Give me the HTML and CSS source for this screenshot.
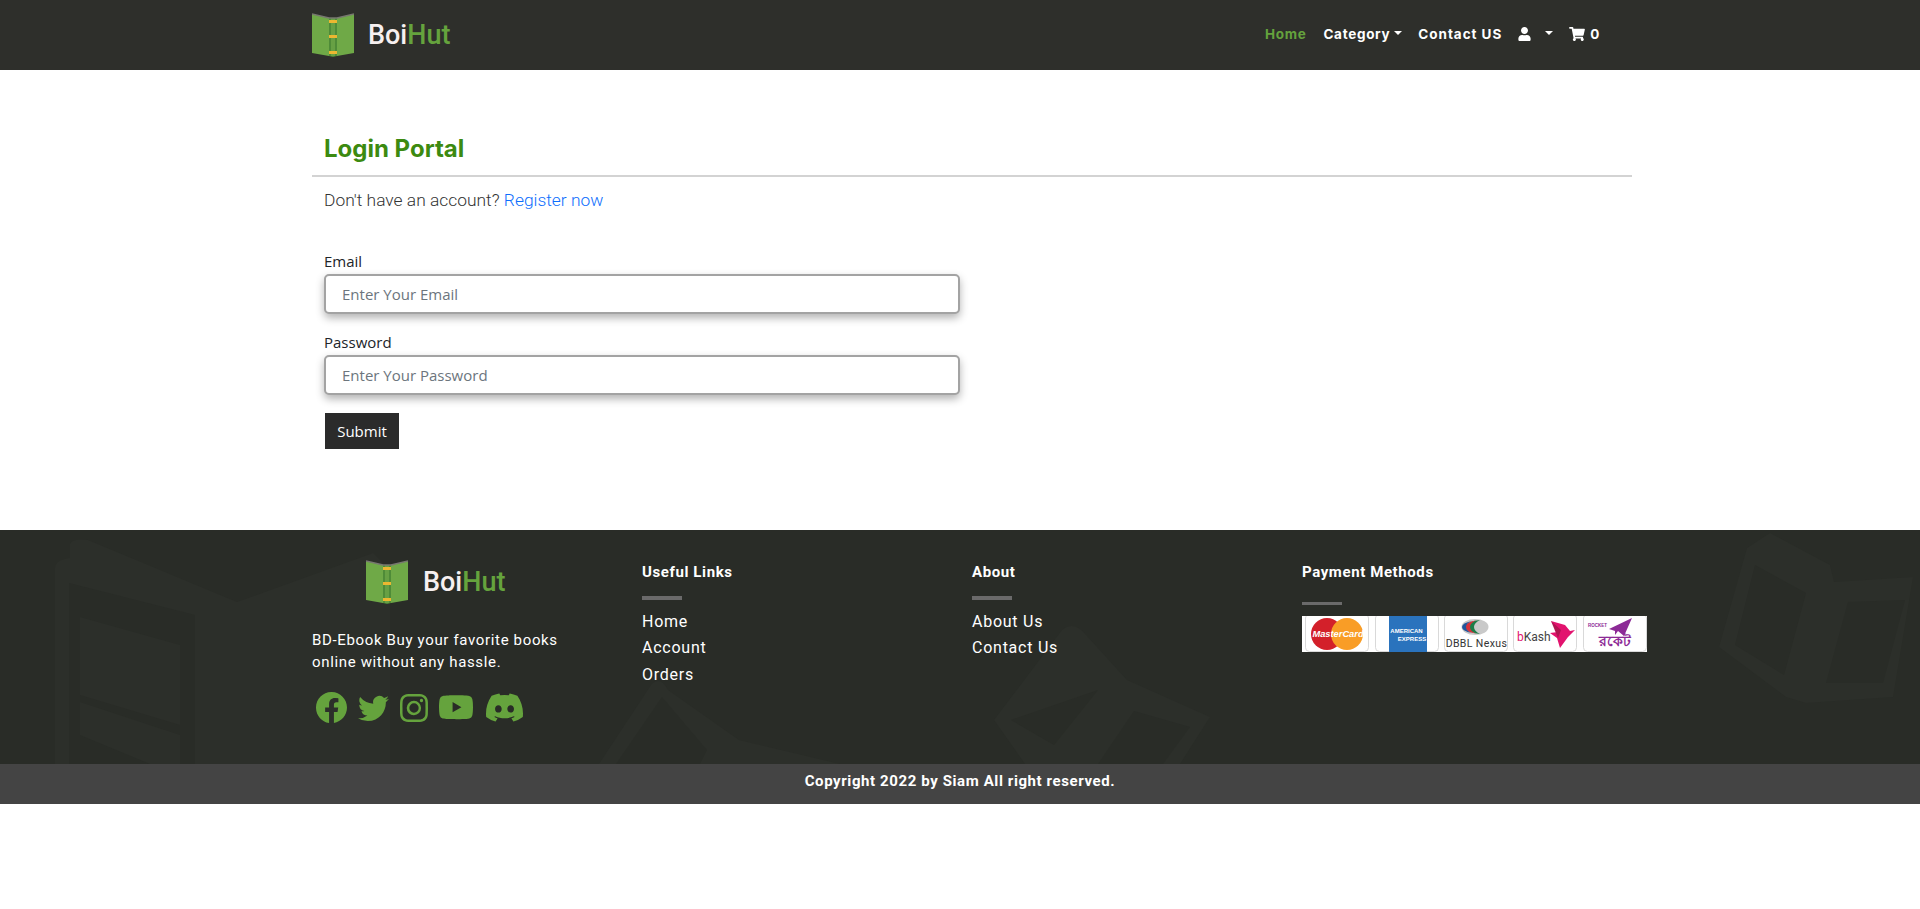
FILE: index.html
```html
<!DOCTYPE html>
<html>
<head>
	<title>BoiHut - Login</title>
	<link rel="stylesheet" href="styles.css">
</head>
<body>
	<svg class="defs">
		<symbol id="book" viewBox="0 0 42 44">
			<path d="M0 1 L17 5 V43 L0 40 Z" fill="#6fa947"/>
			<path d="M42 1 L25 5 V43 L42 40 Z" fill="#6fa947"/>
			<path d="M17 5 H25 V43 L21 44 L17 43 Z" fill="#4f8b38"/>
			<path d="M19 5 H23 V43 H19 Z" fill="#67a044"/>
			<path d="M0 1 L17 5 H25 L42 1" fill="none" stroke="#77786f" stroke-width="1.5"/>
			<path d="M17 7 H25 V10 H17 Z M17 22 H25 V25 H17 Z M17 38 H25 V41 H17 Z" fill="#ecb731"/>
		</symbol>
	</svg>

	<nav class="navbar">
		<div class="container nav-inner">
			<a class="brand" href="#">
				<svg class="book"><use href="#book"/></svg>
				<span class="brand-name">Boi<span class="green">Hut</span></span>
			</a>
			<ul class="nav-links">
				<li class="nav-home"><a href="#">Home</a></li>
				<li class="nav-cat"><a href="#">Category</a><span class="caret"></span></li>
				<li class="nav-contact"><a href="#">Contact US</a></li>
				<li class="nav-user">
					<svg class="user-icon" viewBox="0 0 448 512"><path fill="#fff" d="M224 256c70.7 0 128-57.3 128-128S294.7 0 224 0 96 57.3 96 128s57.3 128 128 128zm89.6 32h-16.7c-22.2 10.2-46.9 16-72.9 16s-50.6-5.8-72.9-16h-16.7C60.2 288 0 348.2 0 422.4V464c0 26.5 21.5 48 48 48h352c26.5 0 48-21.5 48-48v-41.6c0-74.2-60.2-134.4-134.4-134.4z"/></svg>
					<span class="caret"></span>
				</li>
				<li class="nav-cart">
					<svg class="cart-icon" viewBox="0 0 576 512"><path fill="#fff" d="M528.12 301.319l47.273-208C578.806 78.301 567.391 64 551.99 64H159.208l-9.166-44.81C147.758 8.021 137.93 0 126.529 0H24C10.745 0 0 10.745 0 24v16c0 13.255 10.745 24 24 24h69.883l70.248 343.435C147.325 417.1 136 435.222 136 456c0 30.928 25.072 56 56 56s56-25.072 56-56c0-15.674-6.447-29.835-16.824-40h209.647C430.447 426.165 424 440.326 424 456c0 30.928 25.072 56 56 56s56-25.072 56-56c0-22.172-12.888-41.332-31.579-50.405l5.517-24.276c3.413-15.018-8.002-29.319-23.403-29.319H218.117l-6.545-32h293.145c11.206 0 20.92-7.754 23.403-18.681z"/></svg>
					<span>0</span>
				</li>
			</ul>
		</div>
	</nav>

	<main class="container login">
		<h2 class="login-title">Login Portal</h2>
		<p class="login-note">Don't have an account? <a href="#">Register now</a></p>
		<form class="login-form">
			<label class="field-label" for="email">Email</label>
			<input class="field" id="email" type="email" placeholder="Enter Your Email">
			<label class="field-label second" for="password">Password</label>
			<input class="field" id="password" type="password" placeholder="Enter Your Password">
			<button class="submit-btn" type="button">Submit</button>
		</form>
	</main>

	<footer>
		<div class="footer-main">
			<!-- faint books behind the footer -->
			<svg class="watermark" viewBox="0 0 1920 234" preserveAspectRatio="none">
				<g fill="#2c2f2a">
					<path d="M55 234 V38 Q55 30 70 28 V14 Q72 8 88 10 L237 72 L373 23 L390 40 V234 Z"/>
					<path d="M599 234 L651 155 Q660 145 668 160 L739 210 L840 234 Z"/>
					<path d="M1025 234 L994 190 L1062 100 Q1074 90 1086 105 L1127 150 L1210 187 L1180 234 Z"/>
					<path d="M1719 117 L1747 18 L1770 3 L1830 35 L1834 52 L1913 47 L1893 167 L1806 173 L1786 167 Z"/>
				</g>
				<g fill="#292c27">
					<path d="M69 234 V53 L195 85 V234 Z"/>
					<path d="M616 234 L662 167 L707 220 L700 234 Z"/>
					<path d="M1011 190 L1098 160 L1054 215 Z"/>
					<path d="M1134 181 L1190 197 L1163 234 H1098 Z"/>
					<path d="M1755 35 L1806 63 L1784 145 L1735 115 Z"/>
					<path d="M1848 72 L1905 70 L1883 153 H1826 Z"/>
				</g>
				<g fill="#2c2f2a">
					<path d="M80 87 L180 115 V195 L80 165 Z"/>
					<path d="M80 172 L180 205 V234 H150 L80 205 Z"/>
				</g>
			</svg>
			<div class="container footer-grid">
				<div class="footer-about">
					<a class="brand footer-brand" href="#">
						<svg class="book"><use href="#book"/></svg>
						<span class="brand-name">Boi<span class="green">Hut</span></span>
					</a>
					<p class="footer-text">BD-Ebook Buy your favorite books online without any hassle.</p>
					<div class="socials">
						<svg class="soc-fb" viewBox="0 0 16 16"><path d="M16 8.049c0-4.446-3.582-8.05-8-8.05C3.58 0-.002 3.603-.002 8.05c0 4.017 2.926 7.347 6.75 7.951v-5.625h-2.03V8.05H6.75V6.275c0-2.017 1.195-3.131 3.022-3.131.876 0 1.791.157 1.791.157v1.98h-1.009c-.993 0-1.303.621-1.303 1.258v1.51h2.218l-.354 2.326H9.25V16c3.824-.604 6.75-3.934 6.75-7.951z"/></svg>
						<svg class="soc-tw" viewBox="0 0 16 16"><path d="M5.026 15c6.038 0 9.341-5.003 9.341-9.334 0-.14 0-.282-.006-.422A6.685 6.685 0 0 0 16 3.542a6.658 6.658 0 0 1-1.889.518 3.301 3.301 0 0 0 1.447-1.817 6.533 6.533 0 0 1-2.087.793A3.286 3.286 0 0 0 7.875 6.03a9.325 9.325 0 0 1-6.767-3.429 3.289 3.289 0 0 0 1.018 4.382A3.323 3.323 0 0 1 .64 6.575v.045a3.288 3.288 0 0 0 2.632 3.218 3.203 3.203 0 0 1-.865.115 3.23 3.23 0 0 1-.614-.057 3.283 3.283 0 0 0 3.067 2.277A6.588 6.588 0 0 1 .78 13.58a6.32 6.32 0 0 1-.78-.045A9.344 9.344 0 0 0 5.026 15z"/></svg>
						<svg class="soc-ig" viewBox="0 0 16 16"><path d="M8 0C5.829 0 5.556.01 4.703.048 3.85.088 3.269.222 2.76.42a3.917 3.917 0 0 0-1.417.923A3.927 3.927 0 0 0 .42 2.76C.222 3.268.087 3.85.048 4.7.01 5.555 0 5.827 0 8.001c0 2.172.01 2.444.048 3.297.04.852.174 1.433.372 1.942.205.526.478.972.923 1.417.444.445.89.719 1.416.923.51.198 1.09.333 1.942.372C5.555 15.99 5.827 16 8 16s2.444-.01 3.298-.048c.851-.04 1.434-.174 1.943-.372a3.916 3.916 0 0 0 1.416-.923c.445-.445.718-.891.923-1.417.197-.509.332-1.09.372-1.942C15.99 10.445 16 10.173 16 8s-.01-2.445-.048-3.299c-.04-.851-.175-1.433-.372-1.941a3.926 3.926 0 0 0-.923-1.417A3.911 3.911 0 0 0 13.24.42c-.51-.198-1.092-.333-1.943-.372C10.443.01 10.172 0 7.998 0h.003zm-.717 1.442h.718c2.136 0 2.389.007 3.232.046.78.035 1.204.166 1.486.275.373.145.64.319.92.599.28.28.453.546.598.92.11.281.24.705.275 1.485.039.843.047 1.096.047 3.231s-.008 2.389-.047 3.232c-.035.78-.166 1.203-.275 1.485a2.47 2.47 0 0 1-.599.919c-.28.28-.546.453-.92.598-.28.11-.704.24-1.485.276-.843.038-1.096.047-3.232.047s-2.39-.009-3.233-.047c-.78-.036-1.203-.166-1.485-.276a2.478 2.478 0 0 1-.92-.598 2.48 2.48 0 0 1-.6-.92c-.109-.281-.24-.705-.275-1.485-.038-.843-.046-1.096-.046-3.233 0-2.136.008-2.388.046-3.231.036-.78.166-1.204.276-1.486.145-.373.319-.64.599-.92.28-.28.546-.453.92-.598.282-.11.705-.24 1.485-.276.738-.034 1.024-.044 2.515-.045v.002zm4.988 1.328a.96.96 0 1 0 0 1.92.96.96 0 0 0 0-1.92zm-4.27 1.122a4.109 4.109 0 1 0 0 8.217 4.109 4.109 0 0 0 0-8.217zm0 1.441a2.667 2.667 0 1 1 0 5.334 2.667 2.667 0 0 1 0-5.334z"/></svg>
						<svg class="soc-yt" viewBox="0 0 16 16"><path d="M8.051 1.999h.089c.822.003 4.987.033 6.11.335a2.01 2.01 0 0 1 1.415 1.42c.101.38.172.883.22 1.402l.01.104.022.26.008.104c.065.914.073 1.77.074 1.957v.075c-.001.194-.01 1.108-.082 2.06l-.008.105-.009.104c-.05.572-.124 1.14-.235 1.558a2.007 2.007 0 0 1-1.415 1.42c-1.16.312-5.569.334-6.18.335h-.142c-.309 0-1.587-.006-2.927-.052l-.17-.006-.087-.004-.171-.007-.171-.007c-1.11-.049-2.167-.128-2.654-.26a2.007 2.007 0 0 1-1.415-1.419c-.111-.417-.185-.986-.235-1.558L.09 9.82l-.008-.104A31.4 31.4 0 0 1 0 7.68v-.123c.002-.215.01-.958.064-1.778l.007-.103.003-.052.008-.104.022-.26.01-.104c.048-.519.119-1.023.22-1.402a2.007 2.007 0 0 1 1.415-1.42c.487-.13 1.544-.21 2.654-.26l.17-.007.172-.006.086-.003.171-.007A99.788 99.788 0 0 1 7.858 2h.193zM6.4 5.209v4.818l4.157-2.408L6.4 5.209z"/></svg>
						<svg class="soc-dc" viewBox="0 0 16 16"><path d="M13.545 2.907a13.227 13.227 0 0 0-3.257-1.011.05.05 0 0 0-.052.025c-.141.25-.297.577-.406.833a12.19 12.19 0 0 0-3.658 0 8.258 8.258 0 0 0-.412-.833.051.051 0 0 0-.052-.025c-1.125.194-2.22.534-3.257 1.011a.041.041 0 0 0-.021.018C.356 6.024-.213 9.047.066 12.032c.001.014.01.028.021.037a13.276 13.276 0 0 0 3.995 2.02.05.05 0 0 0 .056-.019c.308-.42.582-.863.818-1.329a.05.05 0 0 0-.01-.059.051.051 0 0 0-.018-.011 8.875 8.875 0 0 1-1.248-.595.05.05 0 0 1-.02-.066.051.051 0 0 1 .015-.019c.084-.063.168-.129.248-.195a.05.05 0 0 1 .051-.007c2.619 1.196 5.454 1.196 8.041 0a.052.052 0 0 1 .053.007c.08.066.164.132.248.195a.051.051 0 0 1-.004.085 8.254 8.254 0 0 1-1.249.594.05.05 0 0 0-.03.03.052.052 0 0 0 .003.041c.24.465.515.909.817 1.329a.05.05 0 0 0 .056.019 13.235 13.235 0 0 0 4.001-2.02.049.049 0 0 0 .021-.037c.334-3.451-.559-6.449-2.366-9.106a.034.034 0 0 0-.02-.019Zm-8.198 7.307c-.789 0-1.438-.724-1.438-1.612 0-.889.637-1.613 1.438-1.613.807 0 1.45.73 1.438 1.613 0 .888-.637 1.612-1.438 1.612Zm5.316 0c-.788 0-1.438-.724-1.438-1.612 0-.889.637-1.613 1.438-1.613.807 0 1.451.73 1.438 1.613 0 .888-.631 1.612-1.438 1.612Z"/></svg>
					</div>
				</div>
				<div class="footer-col">
					<h5 class="footer-head">Useful Links</h5>
					<div class="footer-bar"></div>
					<a class="footer-link" href="#">Home</a>
					<a class="footer-link" href="#">Account</a>
					<a class="footer-link" href="#">Orders</a>
				</div>
				<div class="footer-col">
					<h5 class="footer-head">About</h5>
					<div class="footer-bar"></div>
					<a class="footer-link" href="#">About Us</a>
					<a class="footer-link" href="#">Contact Us</a>
				</div>
				<div class="footer-col">
					<h5 class="footer-head">Payment Methods</h5>
					<div class="footer-bar pay-bar"></div>
					<svg class="payments" viewBox="0 0 345 36">
						<rect width="345" height="36" fill="#fff"/>
						<g fill="#fff" stroke="#d9d9d9">
							<rect x="3.5" y="-2" width="63" height="37.5" rx="4"/>
							<rect x="73.5" y="-2" width="63" height="37.5" rx="4"/>
							<rect x="142.5" y="-2" width="63" height="37.5" rx="4"/>
							<rect x="211.5" y="-2" width="63" height="37.5" rx="4"/>
							<rect x="281.5" y="-2" width="63" height="37.5" rx="4"/>
						</g>
						<circle cx="25" cy="18" r="16" fill="#d3202a"/>
						<circle cx="45" cy="18" r="16" fill="#f99d26"/>
						<text class="pay-mc" x="36" y="21" text-anchor="middle">MasterCard</text>
						<rect x="87" y="0" width="38" height="36" fill="#2a73bd"/>
						<text class="pay-amex" x="104.5" y="17" text-anchor="middle">AMERICAN</text>
						<text class="pay-amex" x="110" y="25" text-anchor="middle">EXPRESS</text>
						<ellipse cx="173" cy="11" rx="13.5" ry="8" fill="#c9c9c9"/>
						<path d="M178 4 Q166 5 167 11 Q167 17 178 18 Q172 15 172 11 Q172 7 178 4 Z" fill="#1c7d48"/>
						<path d="M174 4.5 Q163 6 163 11 Q163 16 174 17.5 Q168 15 168 11 Q168 7 174 4.5 Z" fill="#d6323a"/>
						<path d="M170 5 Q160 7 160 11 Q160 15 170 17 Q164 15 164 11 Q164 7 170 5 Z" fill="#21569c"/>
						<text class="pay-dbbl" x="174.5" y="31" text-anchor="middle">DBBL Nexus</text>
						<text class="pay-bkash" x="215" y="25"><tspan fill="#e2136e">b</tspan>Kash</text>
						<path d="M249 5 L263 9 L268 15 L273 14 L266 21 L258 32 L255 22 L248 17 L256 16 Z" fill="#e2136e"/>
						<path d="M249 5 L259 14 L256 22 Z" fill="#b01552"/>
						<text class="pay-rocket" x="286" y="11">ROCKET</text>
						<path d="M307 13 L330 2 L322 20 L316 15 L313 19 L313 15 Z" fill="#8c2a96"/>
						<text class="pay-rocket-bn" x="313" y="30" text-anchor="middle">রকেট</text>
					</svg>
				</div>
			</div>
		</div>
		<div class="copyright">Copyright 2022 by Siam All right reserved.</div>
	</footer>
</body>
</html>
```

FILE: styles.css
```css
* {
	box-sizing: border-box;
}
body {
	margin: 0;
	background-color: #fff;
	font-family: Roboto, sans-serif;
}
a {
	text-decoration: none;
}
.defs {
	display: none;
}
.container {
	width: 1320px;
	margin-left: 312px;
}
.green {
	color: #65a33d;
}

/* navbar */
.navbar {
	height: 70px;
	background-color: #2e2f2b;
}
.nav-inner {
	height: 100%;
	display: flex;
	align-items: center;
	justify-content: space-between;
}
.brand {
	display: flex;
	align-items: center;
	gap: 15px;
}
.navbar .brand {
	gap: 14px;
}
.book {
	width: 42px;
	height: 44px;
}
.brand-name {
	font-family: Roboto, sans-serif;
	font-size: 27px;
	font-weight: 500;
	color: #f6f0f0;
}
.nav-links {
	list-style: none;
	margin: 0;
	padding: 0 32px 3px 0;
	display: flex;
	align-items: center;
	font-family: Inter, sans-serif;
	font-size: 13.5px;
	font-weight: 700;
	letter-spacing: .7px;
	color: #fff;
}
.nav-links li {
	display: flex;
	align-items: center;
}
.nav-links a {
	color: #fff;
}
.nav-links .nav-home a {
	color: #65a33d;
}
.nav-home {
	margin-right: 17px;
}
.nav-cat {
	margin-right: 16px;
}
.nav-contact {
	margin-right: 16px;
	letter-spacing: .95px;
}
.nav-user {
	margin-right: 16px;
}
.caret {
	width: 0;
	height: 0;
	margin-left: 4px;
	margin-top: -2px;
	border-left: 4px solid transparent;
	border-right: 4px solid transparent;
	border-top: 4px solid #fff;
}
.nav-user .caret {
	margin-left: 14px;
}
.user-icon {
	width: 13px;
	height: 14px;
}
.cart-icon {
	width: 16px;
	height: 14px;
	margin-right: 5px;
}

/* login */
.login {
	height: 460px;
	padding-top: 64px;
}
.login-title {
	margin: 0;
	padding: 0 12px 11px;
	height: 43px;
	border-bottom: 2px solid #d3d3d3;
	font-family: Inter, sans-serif;
	font-size: 24px;
	font-weight: 700;
	line-height: 30px;
	color: #3c8a10;
}
.login-note {
	margin: 0;
	padding: 11px 12px 0;
	font-size: 17.4px;
	font-weight: 300;
	line-height: 24px;
	color: #333;
}
.login-note a {
	color: #0d6efd;
}
.login-form {
	width: 660px;
	padding: 0 12px;
	margin-top: 40px;
	display: flex;
	flex-direction: column;
	align-items: flex-start;
}
.field-label {
	height: 22px;
	font-family: "Open Sans", sans-serif;
	font-size: 15px;
	line-height: 19px;
	color: #212529;
}
.second {
	margin-top: 19px;
}
.field {
	width: 636px;
	height: 40px;
	padding: 0 16px;
	border: 2px solid #a3a3a3;
	border-radius: 5px;
	box-shadow: 0 4px 8px rgba(0, 0, 0, .3);
	background: #fff;
	font-family: "Open Sans", sans-serif;
	font-size: 15px;
}
.field::placeholder {
	color: #6c757d;
}
.submit-btn {
	margin: 18px 0 0 1px;
	width: 74px;
	height: 36px;
	border: 0;
	background-color: #2b2b2b;
	color: #fff;
	font-family: "Open Sans", sans-serif;
	font-size: 15px;
}

/* footer */
.footer-main {
	position: relative;
	height: 234px;
	padding-top: 32px;
	background-color: #292c27;
	overflow: hidden;
}
.watermark {
	position: absolute;
	left: 0;
	top: 0;
	width: 100%;
	height: 100%;
}
.footer-grid {
	position: relative;
	display: grid;
	grid-template-columns: repeat(4, 330px);
}
.footer-brand {
	margin: -2px 0 0 54px;
}
.footer-text {
	margin: 25px 0 0;
	width: 260px;
	font-size: 15px;
	font-weight: 400;
	line-height: 22px;
	letter-spacing: .65px;
	color: #fff;
}
.socials {
	margin: 16px 0 0 4px;
	display: flex;
	align-items: center;
	gap: 11px;
	fill: #65a33d;
}
.soc-fb, .soc-tw {
	width: 31px;
	height: 31px;
}
.soc-ig {
	width: 28px;
	height: 28px;
}
.soc-yt {
	width: 34px;
	height: 34px;
}
.soc-dc {
	width: 37px;
	height: 37px;
	margin-left: 2px;
}
.footer-head {
	margin: 0;
	font-size: 15px;
	font-weight: 700;
	line-height: 20px;
	letter-spacing: .6px;
	color: #fff;
}
.footer-bar {
	width: 40px;
	height: 4px;
	margin: 14px 0 9px;
	background-color: #6a6a6a;
}
.pay-bar {
	margin: 20px 0 11px;
	height: 3px;
}
.footer-link {
	display: block;
	font-size: 16px;
	line-height: 26.4px;
	letter-spacing: .75px;
	color: #fff;
}
.payments {
	display: block;
	width: 345px;
	height: 36px;
}
.pay-mc {
	font: italic 700 9.3px "Liberation Sans", sans-serif;
	fill: #fff;
}
.pay-amex {
	font: 700 6px "Liberation Sans", sans-serif;
	fill: #fff;
}
.pay-dbbl {
	font: 10.5px Roboto, sans-serif;
	fill: #333;
	letter-spacing: .4px;
}
.pay-bkash {
	font: 12px Roboto, sans-serif;
	fill: #444;
}
.pay-rocket {
	font: 700 4.5px "Liberation Sans", sans-serif;
	fill: #8c2a96;
}
.pay-rocket-bn {
	font: 700 14px "Noto Sans", sans-serif;
	fill: #8c2a96;
}
.copyright {
	height: 40px;
	background-color: #444;
	color: #fff;
	font-size: 15px;
	font-weight: 700;
	line-height: 35px;
	letter-spacing: .6px;
	text-align: center;
}
```
